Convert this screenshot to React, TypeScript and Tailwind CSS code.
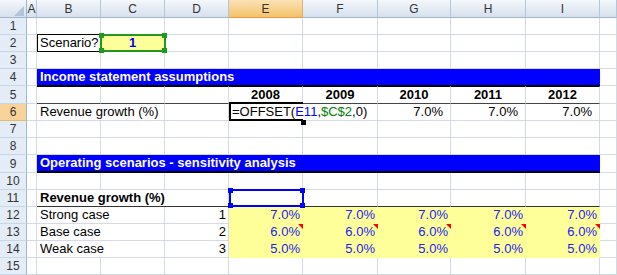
import React from "react";

const G = "#d4d9e6";
const SPAN: Record<number, string> = { 1: "", 2: "col-span-2", 3: "col-span-3", 8: "col-span-8" };

type CellProps = {
  span?: number;
  r?: string;
  b?: string;
  cls?: string;
  children?: React.ReactNode;
};

function Cell({ span = 1, r = "border-r-[#d4d9e6]", b = "border-b-[#d4d9e6]", cls = "", children }: CellProps) {
  return (
    <div
      className={`relative flex items-end whitespace-nowrap border-r border-b ${r} ${b} px-[3px] text-[13px] leading-[16px] text-black ${SPAN[span]} ${cls}`}
    >
      {children}
    </div>
  );
}

function RH({ n, active = false }: { n: number; active?: boolean }) {
  return (
    <div
      className={`flex items-center justify-center border-r border-b border-r-[#9eb6ce] text-[12px] leading-none ${
        active ? "bg-[#f8d49b] border-b-[#e9b86a] text-[#333]" : "bg-[#e4ecf7] border-b-[#c9d6e6] text-[#333]"
      }`}
    >
      {n}
    </div>
  );
}

function CH({ l, active = false }: { l: string; active?: boolean }) {
  return (
    <div
      className={`flex items-center justify-center border-r border-b text-[12px] leading-none text-[#333] ${
        active
          ? "bg-linear-to-b from-[#fbe2b3] to-[#f3c36a] border-r-[#e3b06a] border-b-[#e59a3c]"
          : "bg-linear-to-b from-[#f5f8fc] to-[#d6e0ed] border-r-[#b4c6da] border-b-[#9eb6ce]"
      }`}
    >
      {l}
    </div>
  );
}

function Empty({ n }: { n: number }) {
  return (
    <>
      {Array.from({ length: n }).map((_, i) => (
        <Cell key={i} />
      ))}
    </>
  );
}

const YR = "border-r-[#ffff99]";
const YB = "border-b-[#ffff99]";

function Tri() {
  return (
    <div className="absolute -right-px top-0 h-0 w-0 border-l-[5px] border-t-[5px] border-l-transparent border-t-[#ff0000]" />
  );
}

function Bar({ text, thick }: { text: string; thick?: boolean }) {
  return (
    <Cell
      span={8}
      r="border-r-[#0000ff]"
      b="border-b-black"
      cls={`bg-[#0000ff] font-bold text-white ${thick ? "border-b-2" : ""}`}
    >
      <span className="text-white">{text}</span>
    </Cell>
  );
}

function Corner({ blue = false }: { blue?: boolean }) {
  const c = blue ? "bg-[#0000ff]" : "bg-[#1f9a1f]";
  return <div className={`absolute h-[5px] w-[5px] ${c}`} />;
}

export default function App() {
  const years = ["2008", "2009", "2010", "2011", "2012"];
  const rows12 = [
    { label: "Strong case", n: 1, v: "7.0%", tri: false },
    { label: "Base case", n: 2, v: "6.0%", tri: true },
    { label: "Weak case", n: 3, v: "5.0%", tri: false },
  ];
  return (
    <div className="h-[275px] w-[617px] overflow-hidden bg-white font-['Liberation_Sans',Arial,sans-serif]">
      <div className="grid grid-cols-[27px_10px_64px_64px_64px_74px_75px_73px_75px_74px_1fr] grid-rows-[18px_17px_17px_17px_17px_18px_17px_17px_17px_18px_17px_17px_17px_17px_17px_17px]">
        {/* header */}
        <div className="relative border-r border-b border-r-[#9eb6ce] border-b-[#9eb6ce] bg-linear-to-b from-[#f5f8fc] to-[#d6e0ed]">
          <svg className="absolute left-[14px] top-[6px]" width="10" height="10" viewBox="0 0 10 10">
            <polygon points="10,0 10,10 0,10" fill="#b3c4d9" />
          </svg>
        </div>
        {["A", "B", "C", "D", "E", "F", "G", "H", "I", ""].map((l) => (
          <CH key={l || "J"} l={l} active={l === "E"} />
        ))}

        {/* row 1 */}
        <RH n={1} />
        <Empty n={10} />

        {/* row 2 */}
        <RH n={2} />
        <Cell />
        <Cell>
          <span>Scenario?</span>
          <div className="pointer-events-none absolute -top-px left-0 -right-px -bottom-px z-10 border border-black" />
        </Cell>
        <Cell cls="bg-[#ffff99] justify-center font-bold text-[#0000ff]">
          <span className="text-[#0000ff]">1</span>
          <div className="pointer-events-none absolute -left-px -top-px -right-[2px] -bottom-px z-20 border-2 border-[#1f9a1f]">
            <div className="absolute -left-[3px] -top-[3px] h-[5px] w-[5px] bg-[#1f9a1f]" />
            <div className="absolute -right-[3px] -top-[3px] h-[5px] w-[5px] bg-[#1f9a1f]" />
            <div className="absolute -left-[3px] -bottom-[3px] h-[5px] w-[5px] bg-[#1f9a1f]" />
            <div className="absolute -right-[3px] -bottom-[3px] h-[5px] w-[5px] bg-[#1f9a1f]" />
          </div>
        </Cell>
        <Empty n={7} />

        {/* row 3 */}
        <RH n={3} />
        <Empty n={10} />

        {/* row 4 */}
        <RH n={4} />
        <Cell />
        <Bar text="Income statement assumptions" />
        <Cell />

        {/* row 5 */}
        <RH n={5} />
        <Cell />
        {["", "", "", ...years].map((y, i) => (
          <Cell key={i} b="border-b-[#444]" cls={`border-t border-t-black justify-center font-bold`}>
            {y}
          </Cell>
        ))}
        <Cell />

        {/* row 6 */}
        <RH n={6} active />
        <Cell />
        <Cell span={2}>Revenue growth (%)</Cell>
        <Cell />
        <Cell span={2} cls="px-[3px]">
          <span>
            =OFFSET(<span className="text-[#0000ff]">E11</span>,<span className="text-[#008000]">$C$2</span>,0)
          </span>
          <div className="pointer-events-none absolute left-0 -top-[2px] z-10 h-[19px] w-[74px] border-t-2 border-b-2 border-l-2 border-black" />
          <div className="pointer-events-none absolute left-[72px] top-[16px] z-10 h-[5px] w-[5px] bg-black" />
        </Cell>
        {["7.0%", "7.0%", "7.0%"].map((v, i) => (
          <Cell key={i} cls="justify-end pr-[7px]">
            {v}
          </Cell>
        ))}
        <Cell />

        {/* row 7, 8 */}
        <RH n={7} />
        <Empty n={10} />
        <RH n={8} />
        <Empty n={10} />

        {/* row 9 */}
        <RH n={9} />
        <Cell />
        <Bar text="Operating scenarios - sensitivity analysis" thick />
        <Cell />

        {/* row 10 */}
        <RH n={10} />
        <Empty n={10} />

        {/* row 11 */}
        <RH n={11} />
        <Cell />
        <Cell span={3} b="border-b-[#333]" cls="font-bold">
          Revenue growth (%)
        </Cell>
        <Cell b="border-b-[#333]">
          <div className="pointer-events-none absolute left-0 -top-px -right-[2px] -bottom-px z-10 border-2 border-[#0000ff]">
            <div className="absolute -left-[3px] -top-[3px] h-[5px] w-[5px] bg-[#0000ff]" />
            <div className="absolute -right-[3px] -top-[3px] h-[5px] w-[5px] bg-[#0000ff]" />
            <div className="absolute -left-[3px] -bottom-[3px] h-[5px] w-[5px] bg-[#0000ff]" />
            <div className="absolute -right-[3px] -bottom-[3px] h-[5px] w-[5px] bg-[#0000ff]" />
          </div>
        </Cell>
        <Cell b="border-b-[#333]" />
        <Cell b="border-b-[#333]" />
        <Cell b="border-b-[#333]" />
        <Cell b="border-b-[#333]" />
        <Cell />

        {/* rows 12-14 */}
        {rows12.map((r, ri) => (
          <React.Fragment key={r.label}>
            <RH n={12 + ri} />
            <Cell />
            <Cell span={2}>{r.label}</Cell>
            <Cell cls="justify-end pr-[2px]">{r.n}</Cell>
            {[0, 1, 2, 3, 4].map((k) => (
              <Cell key={k} r={YR} b={YB} cls="justify-end bg-[#ffff99] pr-[2px] text-[#2121f0]">
                <span className="text-[#2121f0]">{r.v}</span>
                {r.tri && <Tri />}
              </Cell>
            ))}
            <Cell />
          </React.Fragment>
        ))}

        {/* row 15 */}
        <RH n={15} />
        <Empty n={10} />
      </div>
    </div>
  );
}
